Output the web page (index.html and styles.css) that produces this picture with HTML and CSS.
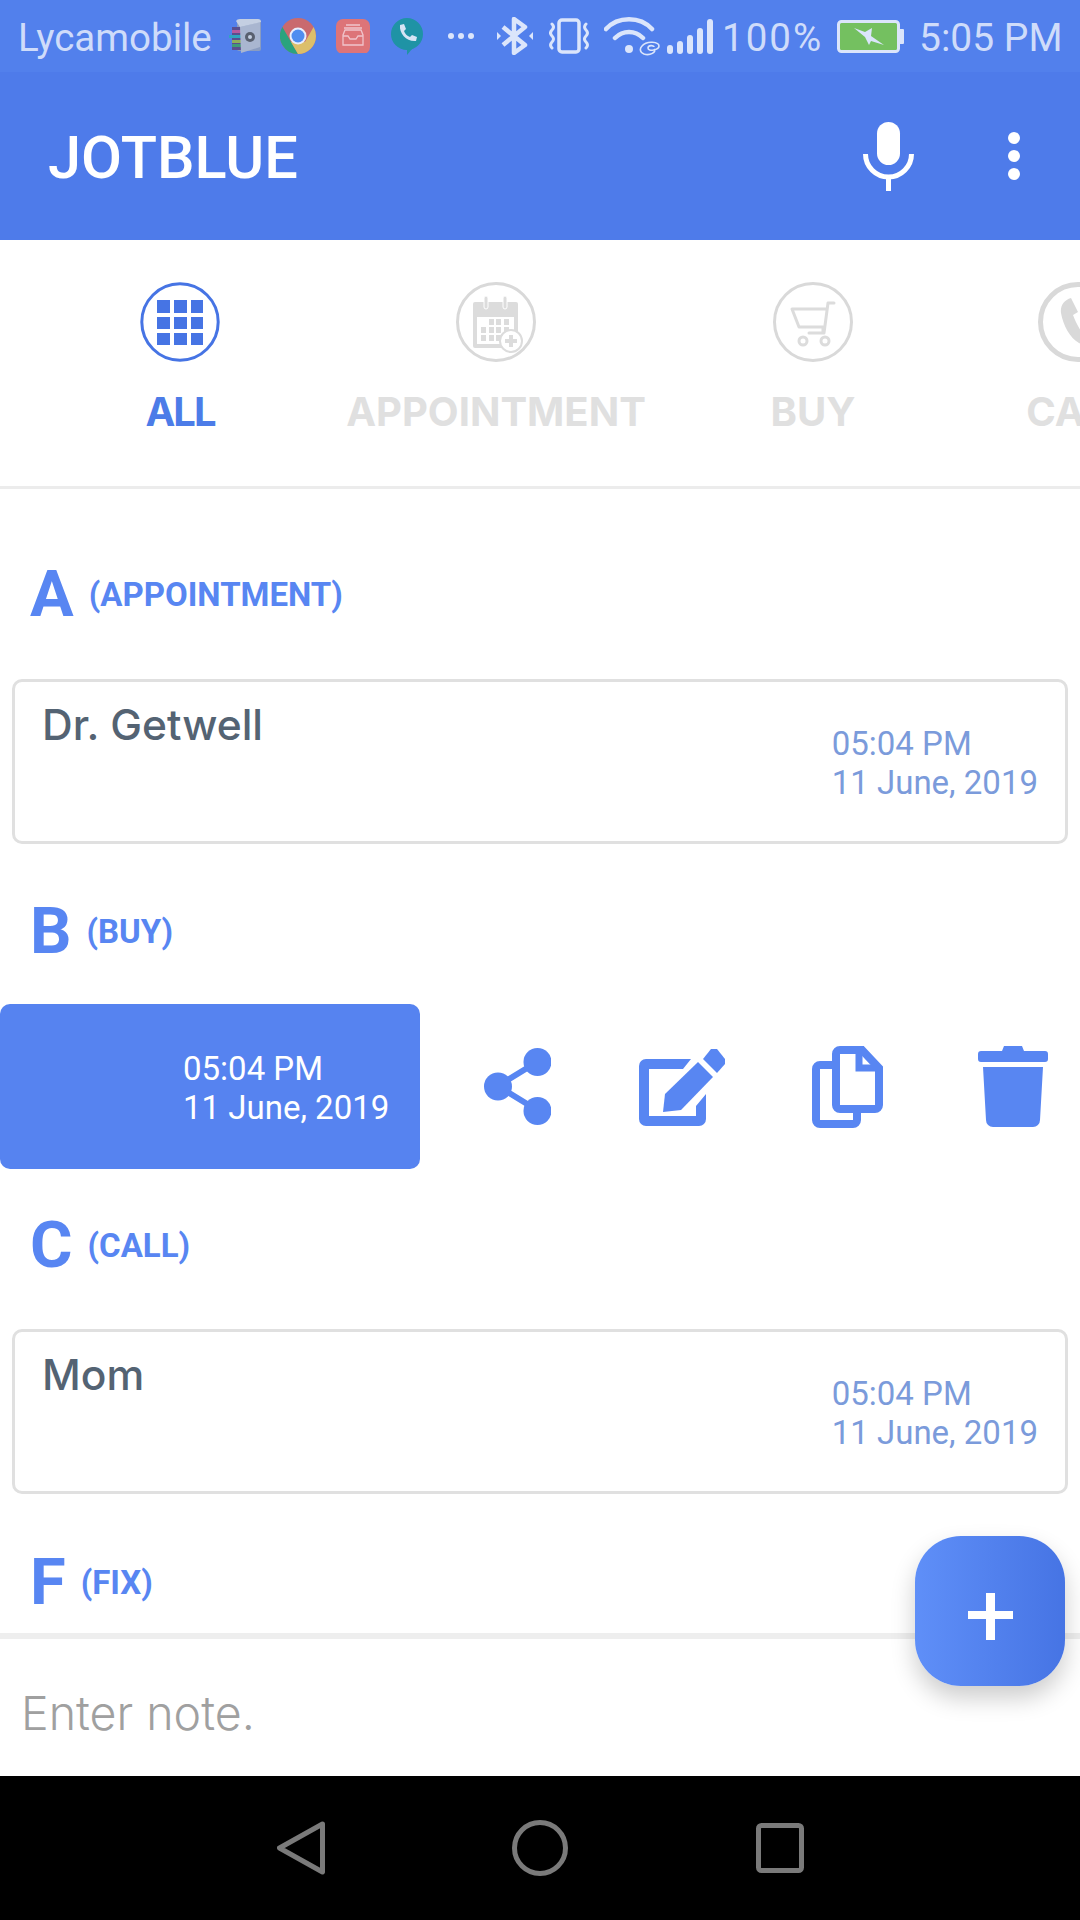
FILE: index.html
```html
<!DOCTYPE html>
<html>

<head>
    <title>JotBlue</title>
    <link rel="stylesheet" href="styles.css">
</head>

<body>
    <div class="phone">
        <div class="status-bar">
            <span class="carrier">Lycamobile</span>
            <svg class="st-vault" viewBox="0 0 34 34">
                <rect x="8" y="1" width="24" height="31" rx="2" fill="#8a9cc0"/>
                <rect x="3" y="8" width="13" height="23" fill="#5a4f8e"/>
                <rect x="0" y="16" width="12" height="3" fill="#2fa5c0"/>
                <rect x="3" y="21" width="12" height="3" fill="#8fae5c"/>
                <rect x="3" y="25" width="12" height="3" fill="#3f9a78"/>
                <rect x="3" y="11" width="12" height="3" fill="#b55aa0"/>
                <path d="M11 8 L31 3 V28 L12 34 Z" fill="#a9b6d0"/>
                <path d="M7 2 Q8 0 11 0 H29 Q32 0 32 3 L11 8 Z" fill="#c4cfe2"/>
                <circle cx="21" cy="18" r="5" fill="#59606f"/>
                <circle cx="21" cy="18" r="2" fill="#c4cfe2"/>
            </svg>
            <svg class="st-chrome" viewBox="0 0 36 36">
                <circle cx="18" cy="18" r="18" fill="#c96a6e"/>
                <path d="M2.4 9 L18 36 A18 18 0 0 1 2.4 9 Z" fill="#2aa37e"/>
                <path d="M18 36 L11 24 H25 L33.6 9 A18 18 0 0 1 36 18 A18 18 0 0 1 18 36 Z" fill="#dcbf6b"/>
                <circle cx="18" cy="18" r="8.5" fill="#e8eefc"/>
                <circle cx="18" cy="18" r="6.5" fill="#4f8df0"/>
            </svg>
            <svg class="st-inbox" viewBox="0 0 34 34">
                <rect width="34" height="35" rx="7" fill="#dd7478"/>
                <path d="M8 9 H26 M10 6 H24 M7 16 L9 11 H25 L27 16 V26 H7 Z M7 17 H12 L14 20 H20 L22 17 H27" fill="none" stroke="#f0c4cb" stroke-width="1.3"/>
            </svg>
            <svg class="st-hangouts" viewBox="0 0 32 37">
                <path d="M16 0 A16 16 0 0 1 16 32 V37 L16 32 A16 16 0 0 1 16 0 Z" fill="#1f93a5"/>
                <path d="M16 31 H21 L16 37 Z" fill="#1f93a5"/>
                <path d="M9 7 L13 6 L15 11 L13 13 C14 16 16 18 19 19 L21 17 L26 19 L25 23 C16 24 8 16 9 7 Z" fill="#d6e4f5"/>
            </svg>
            <svg class="st-dots" viewBox="0 0 28 8">
                <circle cx="4" cy="4" r="3" fill="#dbe5fb"/>
                <circle cx="14" cy="4" r="3" fill="#dbe5fb"/>
                <circle cx="24" cy="4" r="3" fill="#dbe5fb"/>
            </svg>
            <svg class="st-bt" viewBox="0 0 36 38">
                <path d="M6 10 L28 28 L17 36 V2 L28 10 L6 28" fill="none" stroke="#dbe5fb" stroke-width="4.5" stroke-linejoin="round"/>
                <path d="M0 15 L4 19 L0 23 Z M36 15 L32 19 L36 23 Z" fill="#dbe5fb"/>
            </svg>
            <svg class="st-vibrate" viewBox="0 0 40 36">
                <rect x="10" y="2" width="20" height="32" rx="3" fill="none" stroke="#dbe5fb" stroke-width="3.5"/>
                <path d="M3 6 Q6 9 3 12 Q0 15 3 18 Q6 21 3 24 Q0 27 3 30 M37 6 Q34 9 37 12 Q40 15 37 18 Q34 21 37 24 Q40 27 37 30" fill="none" stroke="#dbe5fb" stroke-width="3" stroke-linecap="round"/>
            </svg>
            <svg class="st-wifi" viewBox="0 0 56 40">
                <path d="M2 13 C14 0 36 0 48 13 M11 22 C19 14 31 14 39 22" fill="none" stroke="#dbe5fb" stroke-width="4.5" stroke-linecap="round"/>
                <circle cx="25" cy="33" r="4" fill="#dbe5fb"/>
                <path d="M38 30 C43 24 55 26 55 30 C55 34 44 36 44 32 C44 29 50 29 50 31 M50 33 C53 36 46 40 40 38 C35 36 36 32 38 30" fill="none" stroke="#dbe5fb" stroke-width="1.6"/>
            </svg>
            <div class="st-signal">
                <i class="bar bar-1"></i><i class="bar bar-2"></i><i class="bar bar-3"></i><i class="bar bar-4"></i><i class="bar bar-5"></i>
            </div>
            <span class="st-pct">100%</span>
            <svg class="st-battery" viewBox="0 0 67 33">
                <rect x="1.5" y="1.5" width="60" height="30" rx="3" fill="#74c060" stroke="#dbe5fb" stroke-width="3"/>
                <rect x="62" y="9" width="5" height="15" rx="1" fill="#dbe5fb"/>
                <path d="M17 8 L28 12 L35 8 L34 16 L47 25 L34 21 L32 25 L28 17 Z" fill="#dbe5fb"/>
            </svg>
            <span class="st-time">5:05 PM</span>
        </div>

        <div class="app-bar">
            <span class="app-title">JOTBLUE</span>
            <svg class="ic-mic" viewBox="0 0 51 69">
                <rect x="14" y="0" width="23" height="43" rx="11.5" fill="#fff"/>
                <path d="M2.5 32 A23 23 0 0 0 48.5 32" fill="none" stroke="#fff" stroke-width="5"/>
                <rect x="23" y="54" width="5" height="15" fill="#fff"/>
            </svg>
            <div class="more">
                <i></i><i></i><i></i>
            </div>
        </div>

        <div class="tabs">
            <div class="tab tab-all active">
                <svg class="tab-icon" viewBox="0 0 80 80">
                    <circle cx="40" cy="40" r="38.2" fill="none" stroke="#4674e4" stroke-width="3"/>
                    <g fill="#4674e4">
                        <rect x="17" y="18" width="13" height="13"/><rect x="34" y="18" width="13" height="13"/><rect x="51" y="18" width="12" height="13"/>
                        <rect x="17" y="35" width="13" height="12"/><rect x="34" y="35" width="13" height="12"/><rect x="51" y="35" width="12" height="12"/>
                        <rect x="17" y="51" width="13" height="12"/><rect x="34" y="51" width="13" height="12"/><rect x="51" y="51" width="12" height="12"/>
                    </g>
                </svg>
                <span class="tab-label">ALL</span>
            </div>
            <div class="tab tab-appointment">
                <svg class="tab-icon" viewBox="0 0 80 80">
                    <circle cx="40" cy="40" r="38.5" fill="none" stroke="#d9d9d9" stroke-width="3"/>
                    <rect x="17" y="20" width="45" height="46" rx="2" fill="#dcdcdc"/>
                    <rect x="21" y="35" width="37" height="27" fill="#fff"/>
                    <rect x="28" y="14" width="4" height="13" rx="2" fill="#dcdcdc" stroke="#fff" stroke-width="1"/>
                    <rect x="47" y="14" width="4" height="13" rx="2" fill="#dcdcdc" stroke="#fff" stroke-width="1"/>
                    <g fill="#dcdcdc">
                        <rect x="33" y="37" width="5" height="6"/><rect x="40" y="37" width="5" height="6"/><rect x="48" y="37" width="5" height="6"/>
                        <rect x="25" y="45" width="5" height="6"/><rect x="33" y="45" width="5" height="6"/><rect x="40" y="45" width="5" height="6"/><rect x="48" y="45" width="5" height="6"/>
                        <rect x="25" y="53" width="5" height="6"/><rect x="33" y="53" width="5" height="6"/><rect x="40" y="53" width="5" height="6"/>
                    </g>
                    <circle cx="55" cy="59" r="11" fill="#fff" stroke="#dcdcdc" stroke-width="2"/>
                    <path d="M55 53 V65 M49 59 H61" stroke="#dcdcdc" stroke-width="4"/>
                </svg>
                <span class="tab-label">APPOINTMENT</span>
            </div>
            <div class="tab tab-buy">
                <svg class="tab-icon" viewBox="0 0 80 80">
                    <circle cx="40" cy="40" r="38.5" fill="none" stroke="#d9d9d9" stroke-width="3"/>
                    <path d="M61 21 H55 L51 51 H36 M53 27 H19 L26 45 H50 M50 45 V51" fill="none" stroke="#dcdcdc" stroke-width="3" stroke-linejoin="round" stroke-linecap="round"/>
                    <circle cx="30" cy="59" r="4" fill="none" stroke="#dcdcdc" stroke-width="3"/>
                    <circle cx="52" cy="59" r="4" fill="none" stroke="#dcdcdc" stroke-width="3"/>
                </svg>
                <span class="tab-label">BUY</span>
            </div>
            <div class="tab tab-call">
                <svg class="tab-icon" viewBox="0 0 80 80">
                    <circle cx="40" cy="40" r="37.5" fill="none" stroke="#d9d9d9" stroke-width="5"/>
                    <path d="M33 16 C26 18 22 24 23 31 C25 43 32 56 41 61 C47 64 53 62 57 57 L48 47 L43 49 C39 43 37 38 35 33 L40 30 Z" fill="#d9d9d9"/>
                </svg>
                <span class="tab-label">CALL</span>
            </div>
        </div>

        <div class="list">
            <div class="group-head head-a">
                <span class="letter">A</span>
                <span class="kind">(APPOINTMENT)</span>
            </div>
            <div class="note">
                <span class="note-title">Dr. Getwell</span>
                <div class="note-date">05:04 PM<br>11 June, 2019</div>
            </div>

            <div class="group-head head-b">
                <span class="letter">B</span>
                <span class="kind">(BUY)</span>
            </div>
            <div class="swipe-row">
                <div class="note-open">
                    <div class="note-date">05:04 PM<br>11 June, 2019</div>
                </div>
                <svg class="act act-share" viewBox="0 0 67 77">
                    <path d="M53 14 L14 38 L53 62" fill="none" stroke="#5886f2" stroke-width="6"/>
                    <circle cx="53.5" cy="14" r="14" fill="#5886f2"/>
                    <circle cx="14" cy="38.5" r="14" fill="#5886f2"/>
                    <circle cx="53.5" cy="63" r="14" fill="#5886f2"/>
                </svg>
                <svg class="act act-edit" viewBox="0 0 87 78">
                    <path d="M52 11 H7 A7 7 0 0 0 0 18 V71 A7 7 0 0 0 7 78 H60 A7 7 0 0 0 67 71 V46 L57 58 V68 H10 V21 H44 Z" fill="#5886f2"/>
                    <path d="M26 46 L59 14 L74 29 L42 62 L24 64 Z" fill="#5886f2"/>
                    <path d="M64 11 L72 1 H78 L86 11 V16 L78 25 Z" fill="#5886f2"/>
                </svg>
                <svg class="act act-copy" viewBox="0 0 71 82">
                    <path d="M20 19 H8 A4 4 0 0 0 4 23 V74 A4 4 0 0 0 8 78 H41 A4 4 0 0 0 45 74 V64" fill="none" stroke="#5886f2" stroke-width="8"/>
                    <path d="M28 4 H50 L67 22 V59 A4 4 0 0 1 63 63 H28 A4 4 0 0 1 24 59 V8 A4 4 0 0 1 28 4 Z" fill="none" stroke="#5886f2" stroke-width="8"/>
                    <path d="M47 6 V22 H65" fill="none" stroke="#5886f2" stroke-width="7"/>
                </svg>
                <svg class="act act-trash" viewBox="0 0 70 81">
                    <path d="M24 5 L26 0 H44 L46 5 H67 A3 3 0 0 1 70 8 V13 A3 3 0 0 1 67 16 H3 A3 3 0 0 1 0 13 V8 A3 3 0 0 1 3 5 Z" fill="#5886f2"/>
                    <path d="M5 21 H65 L62 74 A7 7 0 0 1 55 81 H15 A7 7 0 0 1 8 74 Z" fill="#5886f2"/>
                </svg>
            </div>

            <div class="group-head head-c">
                <span class="letter">C</span>
                <span class="kind">(CALL)</span>
            </div>
            <div class="note">
                <span class="note-title">Mom</span>
                <div class="note-date">05:04 PM<br>11 June, 2019</div>
            </div>

            <div class="group-head head-f">
                <span class="letter">F</span>
                <span class="kind">(FIX)</span>
            </div>
        </div>

        <div class="note-input">Enter note.</div>

        <div class="nav-bar">
            <svg class="nav-back" viewBox="0 0 48 54">
                <path d="M45.5 3 L2.5 27 L45.5 51 Z" fill="none" stroke="#7a7a7a" stroke-width="5" stroke-linejoin="round"/>
            </svg>
            <svg class="nav-home" viewBox="0 0 56 56">
                <circle cx="28" cy="28" r="25.5" fill="none" stroke="#7a7a7a" stroke-width="5"/>
            </svg>
            <svg class="nav-recent" viewBox="0 0 48 50">
                <rect x="2.5" y="2.5" width="43" height="45" rx="3" fill="none" stroke="#7a7a7a" stroke-width="5"/>
            </svg>
        </div>

        <div class="fab"><span class="fab-h"></span><span class="fab-v"></span></div>
    </div>
</body>

</html>
```

FILE: styles.css
```css
* {
    box-sizing: border-box;
}

body {
    margin: 0;
    background-color: #fff;
    font-family: Roboto, Arial, sans-serif;
}

.phone {
    position: relative;
    width: 1080px;
    height: 1920px;
    overflow: hidden;
    display: flex;
    flex-direction: column;
}

/* status bar */
.status-bar {
    height: 72px;
    flex: none;
    display: flex;
    align-items: center;
    padding-left: 18px;
    background-color: #5280ec;
    color: #cfdcfa;
    font-size: 38.5px;
    line-height: 44px;
}

.status-bar span {
    padding-top: 4px;
}

.status-bar svg {
    flex: none;
}

.carrier {
    width: 192px;
    white-space: nowrap;
}

.st-vault { width: 34px; height: 34px; margin-left: 19px; }
.st-chrome { width: 36px; height: 36px; margin-left: 17px; }
.st-inbox { width: 34px; height: 34px; margin-left: 20px; }
.st-hangouts { width: 32px; height: 37px; margin-left: 21px; }
.st-dots { width: 28px; height: 8px; margin-left: 24px; }
.st-bt { width: 36px; height: 38px; margin-left: 22px; }
.st-vibrate { width: 40px; height: 36px; margin-left: 16px; }
.st-wifi { width: 56px; height: 40px; margin-left: 15px; }
.st-battery { width: 67px; height: 33px; margin-left: 13px; }

.st-signal {
    width: 46px;
    height: 35px;
    margin-left: 7px;
    display: flex;
    align-items: flex-end;
    justify-content: space-between;
}

.bar {
    width: 6px;
    border-radius: 3px;
    background-color: #dbe5fb;
}

.bar-1 { height: 9px; }
.bar-2 { height: 13px; }
.bar-3 { height: 19px; }
.bar-4 { height: 26px; }
.bar-5 { height: 35px; }

.st-pct {
    width: 102px;
    margin-left: 9px;
    letter-spacing: 2px;
    white-space: nowrap;
}

.st-time {
    margin-left: 15px;
    font-size: 39px;
    white-space: nowrap;
}

/* app bar */
.app-bar {
    height: 168px;
    flex: none;
    display: flex;
    align-items: center;
    padding-left: 48px;
    background-color: #4e7bea;
}

.app-title {
    width: 815px;
    color: #fff;
    font-size: 59.5px;
    font-weight: 500;
    padding-top: 4px;
}

.ic-mic {
    width: 51px;
    height: 69px;
}

.more {
    margin-left: 94px;
    display: flex;
    flex-direction: column;
    gap: 6px;
}

.more i {
    width: 12px;
    height: 12px;
    border-radius: 50%;
    background-color: #fff;
}

/* category tabs */
.tabs {
    height: 249px;
    flex: none;
    display: flex;
    padding-left: 100px;
    padding-top: 42px;
    overflow: hidden;
    border-bottom: 3px solid #ececec;
}

.tab {
    flex: none;
    display: flex;
    flex-direction: column;
    align-items: center;
}

.tab-all { width: 160px; }
.tab-appointment { width: 472px; }
.tab-buy { width: 162px; }
.tab-call { width: 368px; }

.tab-icon {
    width: 80px;
    height: 80px;
}

.tab-label {
    margin-top: 28px;
    font-family: Inter, "Open Sans", sans-serif;
    font-size: 40px;
    font-weight: 700;
    line-height: 44px;
    color: #e0e0e0;
    white-space: nowrap;
}

.active .tab-label {
    color: #4c7ce8;
    letter-spacing: -2px;
}

/* note list */
.list {
    flex: 1;
    min-height: 0;
    overflow: hidden;
}

.group-head {
    height: 80px;
    display: flex;
    align-items: center;
    padding-left: 30px;
    color: #5886f2;
}

.head-a { margin-top: 65px; margin-bottom: 45px; }
.head-b { margin-top: 47px; margin-bottom: 33px; }
.head-c { margin-top: 36px; margin-bottom: 44px; }
.head-f { margin-top: 48px; }

.letter {
    font-size: 65px;
    font-weight: 700;
    margin-right: 15px;
}

.kind {
    font-size: 33px;
    font-weight: 700;
}

.note {
    height: 165px;
    margin: 0 12px;
    padding: 19px 27px 20px 27px;
    display: flex;
    justify-content: space-between;
    border: 3px solid #e0e0e0;
    border-radius: 10px;
}

.note-title {
    font-family: Inter, "Open Sans", sans-serif;
    font-size: 42.5px;
    font-weight: 500;
    line-height: 48px;
    color: #546373;
}

.note-date {
    margin-top: 23px;
    font-size: 33px;
    line-height: 39px;
    color: #7b9bdb;
    white-space: nowrap;
}

.swipe-row {
    height: 165px;
    display: flex;
    align-items: center;
}

.note-open {
    width: 420px;
    height: 165px;
    padding: 45px 25px 0 183px;
    background-color: #5683f0;
    border-radius: 10px;
}

.note-open .note-date {
    margin-top: 0;
    color: #fff;
}

.act { flex: none; }
.act-share { width: 67px; height: 77px; margin-left: 64px; }
.act-edit { width: 87px; height: 78px; margin-left: 88px; }
.act-copy { width: 71px; height: 82px; margin-left: 86px; }
.act-trash { width: 70px; height: 81px; margin-left: 95px; }

/* bottom */
.note-input {
    height: 143px;
    flex: none;
    padding: 50px 21px 0;
    border-top: 6px solid #eee;
    font-family: Inter, "Open Sans", sans-serif;
    font-size: 46.5px;
    font-weight: 300;
    line-height: 48px;
    color: #a0a0a0;
}

.nav-bar {
    height: 144px;
    flex: none;
    display: flex;
    align-items: center;
    justify-content: space-between;
    padding: 0 276px 0 277px;
    background-color: #000;
}

.nav-back { width: 48px; height: 54px; }
.nav-home { width: 56px; height: 56px; margin-left: -2px; }
.nav-recent { width: 48px; height: 50px; }

.fab {
    position: absolute;
    left: 915px;
    top: 1536px;
    width: 150px;
    height: 150px;
    border-radius: 46px;
    background: linear-gradient(to right, #5f8ff8, #4674e4);
    box-shadow: 0 12px 24px rgba(0, 0, 0, 0.2);
}

.fab-h,
.fab-v {
    position: absolute;
    background-color: #fff;
}

.fab-h {
    left: 53px;
    top: 75px;
    width: 45px;
    height: 8px;
}

.fab-v {
    left: 71px;
    top: 57px;
    width: 9px;
    height: 47px;
}
```
